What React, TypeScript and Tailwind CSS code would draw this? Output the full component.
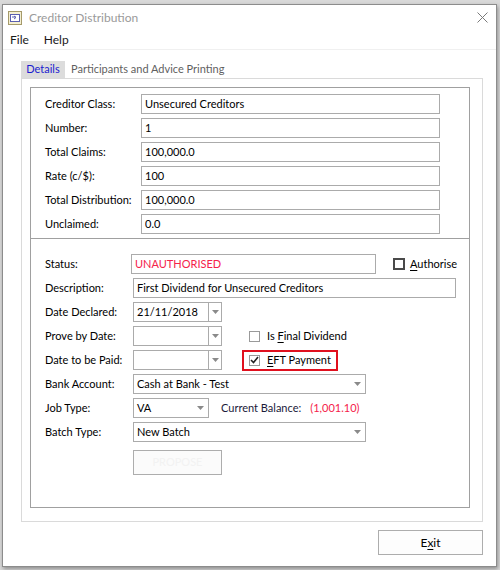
import React from 'react'

const FONT = "font-['Segoe_UI','Lato','Noto_Sans',sans-serif]"

function Arrow() {
  return (
    <svg width="7" height="4" viewBox="0 0 7 4" className="flex-shrink-0">
      <path d="M0 0h7L3.5 4z" fill="#8a8a8a" />
    </svg>
  )
}

function TextField({ value, width, red }: { value: string; width: string; red?: boolean }) {
  return (
    <div
      className={`${width} h-[20px] border border-[#ababab] bg-white flex items-center pl-[3px] whitespace-nowrap overflow-hidden ${
        red ? 'text-[#f5224a]' : 'text-black'
      }`}
    >
      {value}
    </div>
  )
}

/** Date picker style combo: text part plus a separate drop button */
function DateCombo({ value }: { value?: string }) {
  return (
    <div className="w-[89px] h-[20px] border border-[#ababab] bg-white flex flex-shrink-0">
      <div className="flex-1 flex items-center pl-[3px]">{value}</div>
      <div className="w-[13px] border-l border-[#ababab] flex items-center justify-center">
        <Arrow />
      </div>
    </div>
  )
}

function Combo({ value, width }: { value: string; width: string }) {
  return (
    <div className={`${width} h-[20px] border border-[#ababab] bg-white flex items-center pl-[3px] pr-[4px] flex-shrink-0`}>
      <span className="flex-1 whitespace-nowrap">{value}</span>
      <Arrow />
    </div>
  )
}

function Row({ label, labelWidth, children }: { label: string; labelWidth: string; children: React.ReactNode }) {
  return (
    <div className="flex items-center h-[20px] whitespace-nowrap">
      <div className={`${labelWidth} flex-shrink-0 text-black`}>{label}</div>
      {children}
    </div>
  )
}

function CheckBox({ checked, dark }: { checked?: boolean; dark?: boolean }) {
  return (
    <div
      className={`flex items-center justify-center flex-shrink-0 bg-white ${
        dark ? 'w-[12px] h-[12px] border-2 border-[#4a4a4a]' : 'w-[11px] h-[11px] border border-[#9a9a9a]'
      }`}
    >
      {checked && (
        <svg width="9" height="8" viewBox="0 0 9 8">
          <path d="M1 4l2.5 2.5L8 1" stroke="#222" strokeWidth="1.6" fill="none" />
        </svg>
      )}
    </div>
  )
}

export default function App() {
  return (
    <div className={`w-[500px] h-[570px] bg-[#d9d9d9] pt-[4px] pl-[2px] text-[11px] ${FONT}`}>
      <div className="w-[495px] h-[563px] bg-white border border-[#8c8c8c] shadow-[1px_2px_4px_rgba(0,0,0,0.35)] flex flex-col">
        {/* Title bar */}
        <div className="h-[25px] flex items-center pl-[5px] pr-[8px]">
          <svg width="14" height="14" viewBox="0 0 14 14" className="flex-shrink-0">
            <rect x="0.5" y="0.5" width="13" height="13" fill="#f4efd2" stroke="#a59a6a" />
            <rect x="2.5" y="3.5" width="9" height="7" fill="#ffffff" stroke="#5b5fb0" />
            <path d="M4 6h4M6 5l2 1.5L6 8" stroke="#5b5fb0" strokeWidth="1" fill="none" />
          </svg>
          <span className="ml-[7px] text-[#9a9a9a] text-[12px]">Creditor Distribution</span>
          <div className="flex-1" />
          <svg width="11" height="11" viewBox="0 0 11 11">
            <path d="M0.5 0.5l10 10M10.5 0.5l-10 10" stroke="#7a7a7a" strokeWidth="1" />
          </svg>
        </div>

        {/* Menu bar */}
        <div className="h-[20px] flex items-center pl-[7px] gap-[15px] border-b border-[#f0f0f0] text-[#1a1a1a] text-[12px]">
          <span>File</span>
          <span>Help</span>
        </div>

        {/* Body */}
        <div className="flex flex-col pl-[18px] pr-[13px] pt-[11px]">
          {/* Tabs */}
          <div className="flex items-end h-[17px] whitespace-nowrap">
            <div className="h-[17px] w-[44px] bg-[#dcdcdc] text-[#1b1bd0] flex items-center justify-center">Details</div>
            <div className="h-[17px] px-[6px] text-[#5f5f5f] flex items-center">Participants and Advice Printing</div>
          </div>

          {/* Tab panel */}
          <div className="h-[444px] border border-[#dadada] pl-[8px] pt-[8px]">
            <div className="w-[440px] h-[421px] border border-[#a0a0a0] flex flex-col">
              {/* Top section */}
              <div className="flex flex-col gap-[4px] pl-[14px] pt-[6px] pb-[4px] border-b border-[#a0a0a0]">
                <Row label="Creditor Class:" labelWidth="w-[96px]">
                  <TextField value="Unsecured Creditors" width="w-[299px]" />
                </Row>
                <Row label="Number:" labelWidth="w-[96px]">
                  <TextField value="1" width="w-[299px]" />
                </Row>
                <Row label="Total Claims:" labelWidth="w-[96px]">
                  <TextField value="100,000.0" width="w-[299px]" />
                </Row>
                <Row label="Rate (c/$):" labelWidth="w-[96px]">
                  <TextField value="100" width="w-[299px]" />
                </Row>
                <Row label="Total Distribution:" labelWidth="w-[96px]">
                  <TextField value="100,000.0" width="w-[299px]" />
                </Row>
                <Row label="Unclaimed:" labelWidth="w-[96px]">
                  <TextField value="0.0" width="w-[299px]" />
                </Row>
              </div>

              {/* Lower section */}
              <div className="flex flex-col gap-[4px] pl-[14px] pt-[15px]">
                <Row label="Status:" labelWidth="w-[86px]">
                  <TextField value="UNAUTHORISED" width="w-[245px]" red />
                  <div className="ml-[17px]">
                    <CheckBox dark />
                  </div>
                  <span className="ml-[5px]">
                    <span className="underline underline-offset-2">A</span>uthorise
                  </span>
                </Row>
                <Row label="Description:" labelWidth="w-[88px]">
                  <TextField value="First Dividend for Unsecured Creditors" width="w-[323px]" />
                </Row>
                <Row label="Date Declared:" labelWidth="w-[88px]">
                  <DateCombo value="21/11/2018" />
                </Row>
                <Row label="Prove by Date:" labelWidth="w-[88px]">
                  <DateCombo />
                  <div className="ml-[20px] h-[21px] border-2 border-transparent pl-[5px] flex items-center">
                    <CheckBox />
                    <span className="ml-[7px] text-black">
                      Is <span className="underline underline-offset-2">F</span>inal Dividend
                    </span>
                  </div>
                </Row>
                <Row label="Date to be Paid:" labelWidth="w-[88px]">
                  <DateCombo />
                  <div className="ml-[20px] w-[96px] h-[21px] border-2 border-[#e0101e] pl-[5px] flex items-center">
                    <CheckBox checked />
                    <span className="ml-[7px] text-black">
                      <span className="underline underline-offset-2">E</span>FT Payment
                    </span>
                  </div>
                </Row>
                <Row label="Bank Account:" labelWidth="w-[88px]">
                  <Combo value="Cash at Bank - Test" width="w-[233px]" />
                </Row>
                <Row label="Job Type:" labelWidth="w-[88px]">
                  <Combo value="VA" width="w-[76px]" />
                  <span className="ml-[12px] text-[#1a1a3a]">Current Balance:</span>
                  <span className="ml-[9px] text-[#f5224a]">(1,001.10)</span>
                </Row>
                <Row label="Batch Type:" labelWidth="w-[88px]">
                  <Combo value="New Batch" width="w-[233px]" />
                </Row>
                <div className="flex mt-[4px]">
                  <div className="w-[88px]" />
                  <div className="w-[89px] h-[25px] border border-[#adadad] bg-[#fbfbfb] flex items-center justify-center text-[#f2f2f2]">
                    PROPOSE
                  </div>
                </div>
              </div>
            </div>
          </div>

          {/* Footer */}
          <div className="flex justify-end pt-[8px]">
            <div className="w-[105px] h-[25px] border border-[#adadad] bg-[#fdfdfd] flex items-center justify-center text-black text-[12px]">
              E<span className="underline underline-offset-2">x</span>it
            </div>
          </div>
        </div>
      </div>
    </div>
  )
}
